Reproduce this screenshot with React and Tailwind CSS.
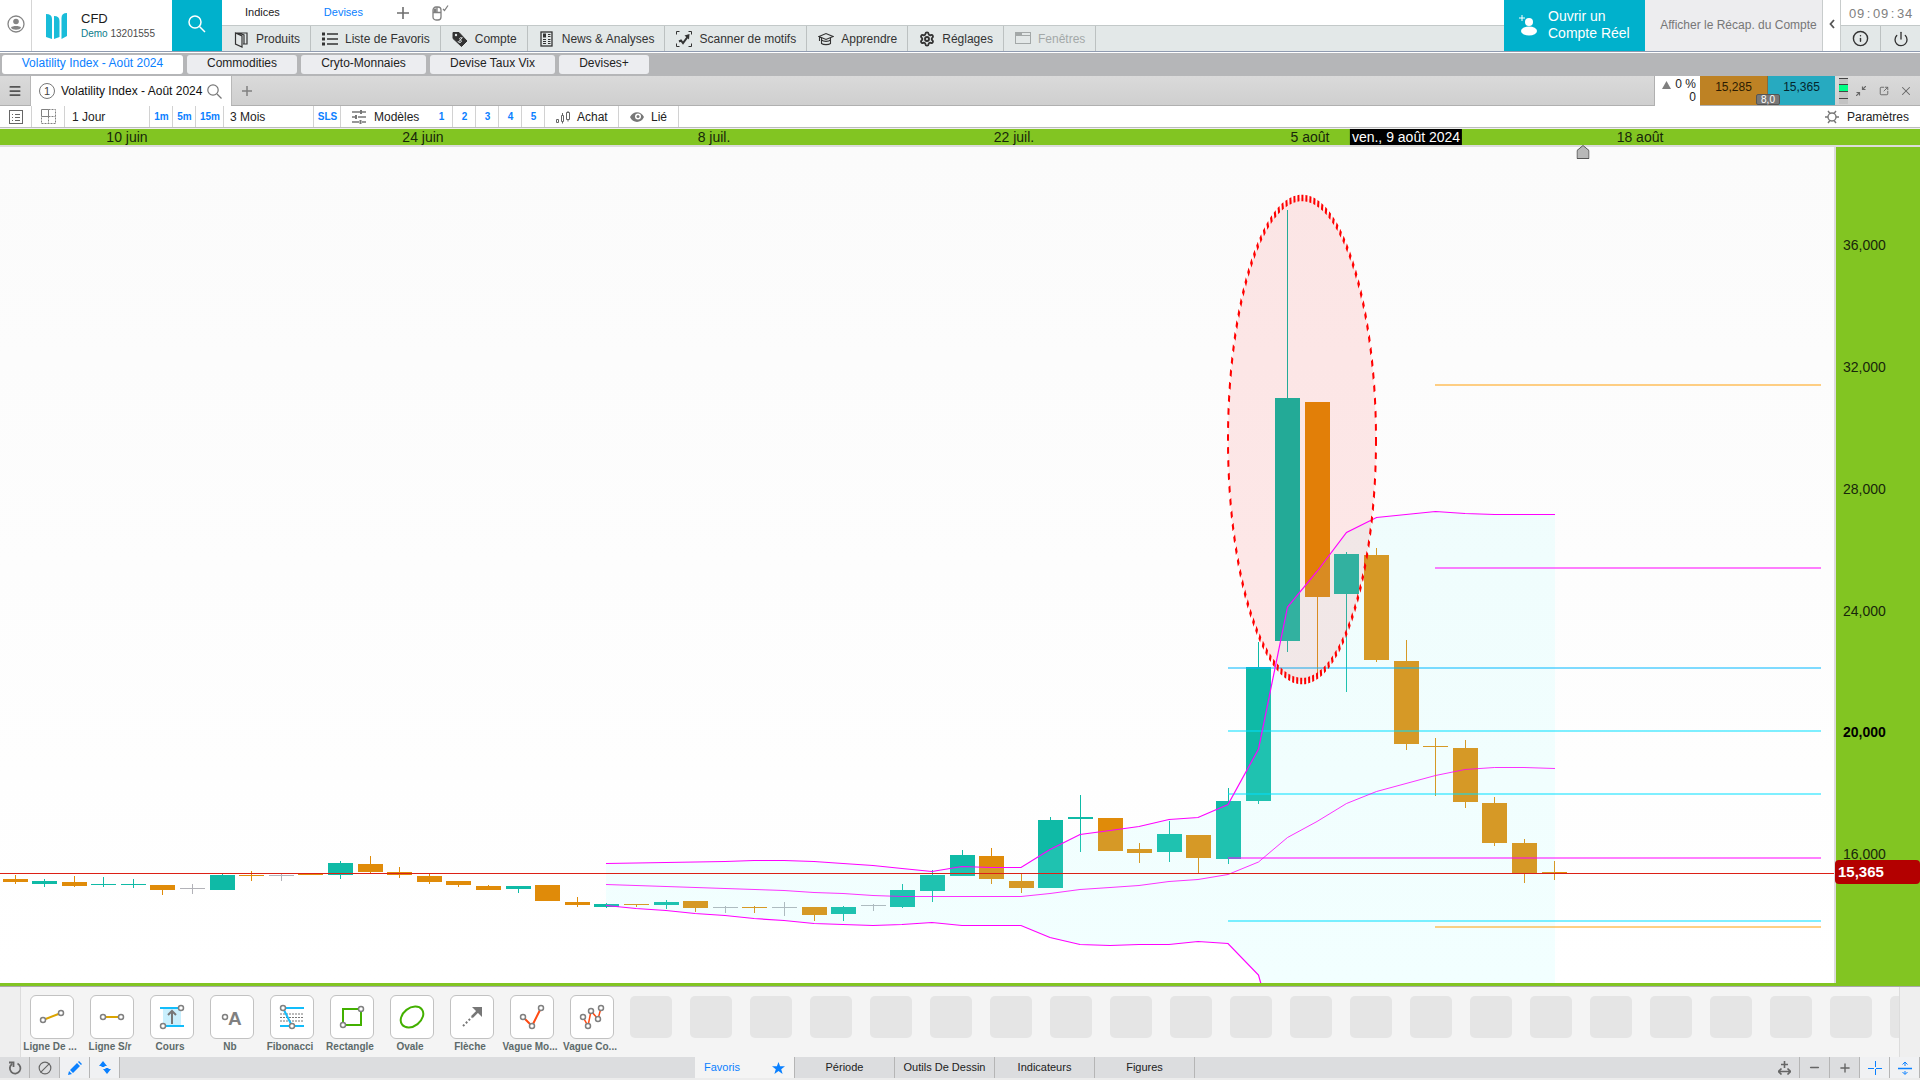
/**
 * App.jsx
 * ──────────────────────────────────────────────────────────────────────────
 * CFD trading workspace: header, chart tabs, candle chart, drawing palette.
 */

import React, { useState } from 'react';
import { Ban, Info, Menu, Minus, Plus, Power, Search, Settings, SquareArrowOutUpRight, X } from 'lucide-react';

const UP = '#0fbaa6';
const DOWN = '#e08b09';
const FLAT = '#b2b2b8';

// [x, high, body top, body bottom, low, colour] in plot units
const CANDLES = [
  [15, 875, 879, 882, 884, DOWN],
  [44, 879, 881, 884, 887, UP],
  [74, 876, 882, 886, 887, DOWN],
  [103, 877, 884, 885, 887, UP],
  [133, 879, 884, 885, 888, UP],
  [162, 885, 885, 890, 895, DOWN],
  [192, 884, 888, 889, 894, FLAT],
  [222, 874, 875, 890, 890, UP],
  [251, 871, 875, 876, 881, DOWN],
  [281, 874, 875, 876, 881, FLAT],
  [310, 873, 874, 875, 875, DOWN],
  [340, 861, 863, 875, 879, UP],
  [370, 856, 864, 872, 873, DOWN],
  [399, 867, 872, 875, 878, DOWN],
  [429, 874, 876, 882, 884, DOWN],
  [458, 881, 881, 885, 887, DOWN],
  [488, 885, 886, 890, 890, DOWN],
  [518, 886, 886, 889, 893, UP],
  [547, 885, 885, 901, 901, DOWN],
  [577, 897, 902, 905, 907, DOWN],
  [606, 903, 904, 907, 908, UP],
  [636, 904, 904, 905, 907, DOWN],
  [666, 900, 902, 905, 909, UP],
  [695, 901, 901, 908, 912, DOWN],
  [725, 906, 907, 908, 913, FLAT],
  [754, 906, 907, 908, 913, DOWN],
  [784, 902, 907, 908, 916, FLAT],
  [814, 907, 907, 915, 921, DOWN],
  [843, 906, 907, 914, 921, UP],
  [873, 904, 905, 906, 911, FLAT],
  [902, 884, 890, 907, 908, UP],
  [932, 870, 875, 891, 902, UP],
  [962, 850, 855, 876, 876, UP],
  [991, 848, 856, 879, 884, DOWN],
  [1021, 874, 881, 888, 893, DOWN],
  [1050, 817, 820, 888, 888, UP],
  [1080, 795, 817, 819, 852, UP],
  [1110, 818, 818, 851, 851, DOWN],
  [1139, 843, 849, 853, 863, DOWN],
  [1169, 821, 834, 852, 862, UP],
  [1198, 835, 835, 858, 873, DOWN],
  [1228, 788, 801, 859, 864, UP],
  [1258, 642, 667, 801, 804, UP],
  [1287, 210, 398, 641, 652, UP],
  [1317, 402, 402, 597, 676, DOWN],
  [1346, 552, 554, 594, 692, UP],
  [1376, 548, 555, 660, 662, DOWN],
  [1406, 640, 661, 744, 750, DOWN],
  [1435, 738, 746, 747, 796, DOWN],
  [1465, 740, 748, 802, 808, DOWN],
  [1494, 797, 803, 843, 846, DOWN],
  [1524, 839, 843, 873, 883, DOWN],
  [1554, 861, 872, 873, 880, DOWN],
];

// Bollinger bands, plot units
const UPPER = '606,863.5 666,862.5 725,861.5 754,860.5 784,860.5 814,861.5 843,863.5 873,865.5 902,868.5 932,871.5 962,866.5 991,867.5 1021,867.5 1050,849.5 1080,834.5 1110,830.5 1139,826.5 1169,819.5 1198,817.5 1228,804.5 1258.5,749 1287.5,607 1317,571.5 1346.5,532.5 1376.5,517.5 1435.5,511.5 1465,513.5 1494.5,514.5 1555,514.5';
const MIDDLE = '606,884.5 666,886.5 784,890.5 814,892.5 843,893.5 873,895.5 902,896.5 1021,896.5 1050,893.5 1080,889.5 1110,887.5 1139,885.5 1169,881.5 1198,879.5 1228,874.5 1258.5,862 1287.5,837.5 1317,821.5 1346.5,803.5 1376.5,791.5 1406,783.5 1435.5,775.5 1465,769.5 1494.5,767.5 1524,767.5 1555,768.5';
const LOWER = '606,905.5 636,908.5 666,910.5 695,913.5 725,915.5 754,918.5 784,920.5 814,923.5 843,924.5 873,925.5 902,924.5 932,922.5 962,925.5 1021,925.5 1050,937.5 1080,944.5 1110,945.5 1139,944.5 1169,944.5 1198,941.5 1228,943.5 1258.5,975 1261,984';

// [x1, y, colour]
const LEVELS = [
  [1435, 385, '#ff9f0a'],
  [1435, 568, '#ff00ff'],
  [1228, 668, '#00b7ff'],
  [1228, 731, '#00dfff'],
  [1228, 794, '#00dfff'],
  [1228, 858, '#ff00ff'],
  [1228, 921, '#00dfff'],
  [1435, 927, '#ff9f0a'],
];

const PLOT_W = 1834;
const PLOT_TOP = 147;
const PLOT_H = 836;

const DATES = [['10 juin', 127], ['24 juin', 423], ['8 juil.', 714], ['22 juil.', 1014], ['5 août', 1310], ['18 août', 1640]];
const PRICES = [['36,000', 245], ['32,000', 367], ['28,000', 489], ['24,000', 611], ['20,000', 732], ['16,000', 854]];

const pctX = x => `${(x / 1920) * 100}%`;
const pctY = y => `${((y - PLOT_TOP) / PLOT_H) * 100}%`;

function Svg({ w = 16, h = 16, children, ...rest }) {
  return (
    <svg width={w} height={h} viewBox={`0 0 ${w} ${h}`} fill="none" stroke="currentColor" aria-hidden="true" {...rest}>
      {children}
    </svg>
  );
}

/* ── Header ─────────────────────────────────────────────────────────── */

const MENU = [
  ['Produits', (
    <Svg w={14} h={18} strokeWidth="1.2">
      <path d="M1.500 3h11.500v11H9M1.500 3v11l6.500 3V6z M4 3l6 2v9" />
    </Svg>
  )],
  ['Liste de Favoris', (
    <Svg w={16} h={14}>
      <path d="M0 2h3M0 7h3M0 12h3" strokeWidth="3" />
      <path d="M5 2h11M5 7h11M5 12h11" strokeWidth="1.500" />
    </Svg>
  )],
  ['Compte', (
    <Svg w={16} h={16}>
      <path d="M1 1.500h6l8 8.500-5.500 5.500L1 7.500z" fill="currentColor" />
      <circle cx="4" cy="4" r="1.2" fill="#e3e8e8" stroke="none" />
      <path d="M10 7c-2-1-3 .5-2 1.500s2 1.500 1 2.500-2.500.5-3-.5M10.500 6.500l-4 4.500" stroke="#e3e8e8" />
    </Svg>
  )],
  ['News & Analyses', (
    <Svg w={13} h={16} strokeWidth="1.3">
      <rect x="1" y="1" width="11" height="14" />
      <path d="M3 3.500h3M3 5.500h3" strokeWidth="2" />
      <path d="M8 3.500h2.500M8 5.500h2.500M3 8.500h3M8 8.500h2.500M3 10.500h3M8 10.500h2.500M3 12.500h3M8 12.500h2.500" strokeWidth="1" />
    </Svg>
  )],
  ['Scanner de motifs', (
    <Svg w={16} h={16}>
      <path d="M.5 3.500v-3h3M12.500.5h3v3M15.500 12.500v3h-3M3.500 15.500h-3v-3" />
      <path d="M3 10.500l2-1 2 2.500L11.500 6" strokeWidth="2" />
      <path d="M8.500 4.500l5-1.500-.5 5.500z" fill="currentColor" stroke="none" />
    </Svg>
  )],
  ['Apprendre', (
    <Svg w={16} h={14} strokeWidth="1.100">
      <path d="M1 4.500L8 1.500l7 3-7 3zM3.500 6v5.500c2 1.500 7 1.500 9 0V6M3.500 8c2 1.800 7 1.800 9 0M1.500 5v4" />
    </Svg>
  )],
  ['Réglages', <Settings size={16} strokeWidth={2.8} />],
  ['Fenêtres', (
    <Svg w={16} h={13}>
      <rect x=".5" y=".5" width="15" height="11" />
      <path d="M1 3.500h14" strokeWidth="1" />
      <path d="M1 2h6" strokeWidth="2" />
    </Svg>
  )],
];

function Header() {
  return (
    <header className="flex h-[52px] shrink-0 border-b border-[#8f9bb0] bg-white">
      <button aria-label="Profil" className="flex w-8 items-center justify-center border-r border-[#d5d5d5] pb-1 text-[#858585]">
        <Svg w={18} h={18} strokeWidth="1.300">
          <circle cx="9" cy="9" r="8" />
          <circle cx="9" cy="6.500" r="2.800" fill="currentColor" stroke="none" />
          <path d="M4 12.500c1-2 9-2 10 0-1 3-9 3-10 0z" fill="currentColor" stroke="none" />
        </Svg>
      </button>
      <div className="flex w-[140px] items-center gap-[14px] pl-[14px]">
        <Svg w={21} h={26} stroke="none">
          <path d="M0 1q6 0 6 5v20l-6-2zM8 3q5.500 0 5.500 5v16l-5.500 2zM15.500 5q0-5 5.500-5v23l-5.500 3z" fill="#19bcd9" />
        </Svg>
        <div className="flex flex-col">
          <span className="text-[13px] leading-4 text-[#1c1c1c]">CFD</span>
          <span className="text-[10px] leading-[14px] text-[#4b4b4b]"><span className="text-[#0c7c8c]">Demo</span> 13201555</span>
        </div>
      </div>
      <button aria-label="Rechercher" className="flex w-[50px] items-center justify-center bg-[#00b1cc] pb-1 text-white">
        <Svg w={18} h={18} strokeWidth="1.500">
          <circle cx="7" cy="7" r="6" />
          <path d="M11.500 11.500L17 17" />
        </Svg>
      </button>

      <div className="flex min-w-0 flex-1 flex-col">
        <div className="flex h-[25px] items-center pl-[23px] text-[11px]">
          <button className="pr-11 text-[#222]">Indices</button>
          <button className="pr-[34px] text-[#0a80ff]">Devises</button>
          <button aria-label="Ajouter" className="pr-[23px] text-[#6f6f6f]">
            <Svg w={12} h={12} strokeWidth="1.600"><path d="M6 0v12M0 6h12" /></Svg>
          </button>
          <button aria-label="Souris" className="text-[#808080]">
            <Svg w={17} h={16} strokeWidth="1.300">
              <rect x="1" y="2" width="8" height="13" rx="3" />
              <path d="M1 7.500h8M5 2v5.500" />
              <path d="M1.500 3.500h3V7h-3z" fill="currentColor" stroke="none" />
              <path d="M11 4l1.500 1.500L16 .5" />
            </Svg>
          </button>
        </div>
        <nav className="flex h-[26px] border-t border-[#c3c9c9] bg-[#e3e8e8] text-xs">
          {MENU.map(([label, icon]) => (
            <button
              key={label}
              className={`flex items-center gap-[5px] border-r border-[#bcc1c1] pl-[9px] pr-[10px] whitespace-nowrap ${
                label === 'Fenêtres' ? 'text-[#a3a8a8]' : 'text-[#333]'
              }`}
            >
              <span className="flex w-5 justify-center">{icon}</span>
              {label}
            </button>
          ))}
        </nav>
      </div>

      <button className="flex w-[141px] items-center gap-[11px] bg-[#00b1cc] pb-0.5 pl-[15px] text-left text-sm leading-[17px] text-white">
        <Svg w={18} h={22} stroke="none" fill="currentColor">
          <path d="M3 1v6M0 4h6" stroke="currentColor" />
          <circle cx="10" cy="8" r="4" />
          <ellipse cx="10" cy="17" rx="8" ry="4.500" />
        </Svg>
        <span>Ouvrir un<br />Compte Réel</span>
      </button>
      <button className="w-[177px] bg-[#ededef] pb-0.5 pl-[10px] text-xs text-[#777]">Afficher le Récap. du Compte</button>
      <button aria-label="Replier" className="flex w-[19px] items-center justify-center border-x border-[#c8cccc] pb-1 text-[#555]">
        <Svg w={6} h={10} strokeWidth="1.800"><path d="M5 1L1.500 5 5 9" /></Svg>
      </button>
      <div className="flex w-[79px] flex-col">
        <time className="h-[25px] text-center text-[13px] leading-[27px] text-[#808080]">
          {[...'09:09:34'].map((c, i) => <span key={i} className="inline-block w-2 text-center">{c}</span>)}
        </time>
        <div className="flex h-[26px] border-t border-[#c3c9c9] bg-[#e3e8e8] text-[#333]">
          <button aria-label="Infos" className="flex flex-1 items-center justify-center border-r border-[#bcc1c1]"><Info size={17} strokeWidth={2} /></button>
          <button aria-label="Quitter" className="flex flex-1 items-center justify-center"><Power size={16} strokeWidth={2} /></button>
        </div>
      </div>
    </header>
  );
}

/* ── Workspace and chart tabs ───────────────────────────────────────── */

const WORKSPACES = [
  ['Volatility Index - Août 2024', 'w-[181px] bg-white text-[#0a80ff]'],
  ['Commodities', 'w-[110px] bg-[#ecedf0] text-[#222]'],
  ['Cryto-Monnaies', 'w-[125px] bg-[#ecedf0] text-[#222]'],
  ['Devise Taux Vix', 'w-[125px] bg-[#ecedf0] text-[#222]'],
  ['Devises+', 'w-[90px] bg-[#ecedf0] text-[#222]'],
];

function WorkspaceTabs() {
  return (
    <nav className="flex h-6 shrink-0 items-center gap-1 border-t border-white bg-[#b5b6b8] pl-0.5 text-xs">
      {WORKSPACES.map(([label, look]) => (
        <button key={label} className={`h-[19px] rounded-[3px] pb-0.5 leading-[17px] ${look}`}>{label}</button>
      ))}
    </nav>
  );
}

function ChartTitleBar() {
  return (
    <div className="flex h-[30px] shrink-0 border-b border-[#b0b0b0] bg-linear-to-b from-[#dadada] to-[#cfcfcf] text-xs">
      <button aria-label="Menu" className="flex w-[31px] items-center justify-center border-r border-[#b8b8b8] text-[#555]">
        <Menu size={14} strokeWidth={3} />
      </button>
      <div className="flex h-[30px] w-[200px] items-center bg-white pl-2 text-[#111]">
        <span className="mr-[6px] flex size-4 items-center justify-center rounded-full border border-[#777] text-[11px] text-[#444]">1</span>
        <span className="whitespace-nowrap">Volatility Index - Août 2024</span>
        <button aria-label="Chercher un produit" className="ml-[5px] text-[#777]">
          <Svg w={15} h={15} strokeWidth="1.200"><circle cx="6" cy="6" r="5.200" /><path d="M10 10l4.500 4.500" /></Svg>
        </button>
      </div>
      <button aria-label="Nouvel onglet" className="flex w-[31px] items-center justify-center border-l border-[#b8b8b8] text-[#808080]">
        <Svg w={10} h={10} strokeWidth="1.500"><path d="M5 0v10M0 5h10" /></Svg>
      </button>

      <div className="ml-auto flex h-[30px] w-[46px] flex-col items-end justify-center border-l border-[#b0b0b0] bg-white pr-1 leading-[13px] text-[#222]">
        <span className="flex items-center gap-1"><Svg w={9} h={8} stroke="none"><path d="M4.500 0L9 8H0z" fill="#808080" /></Svg>0 %</span>
        <span>0</span>
      </div>
      <div className="relative flex w-[135px] leading-[22px]">
        <button className="flex-1 border-r border-[#8a6a3a] bg-[#be8224] pb-2 text-[#2c1c02]">15,285</button>
        <button className="flex-1 bg-[#27aac0] pb-2 text-[#04262d]">15,365</button>
        <span className="absolute left-14 bottom-0 h-[11px] w-6 rounded-xs border border-[#555] bg-[#777] text-center text-[10px] leading-[9px] text-white">8,0</span>
      </div>
      <div className="flex w-[85px] items-center pl-1 text-[#666]">
        <Svg w={9} h={28} stroke="none">
          <path d="M0 1h9v26H0z" fill="#c3c3c3" />
          <path d="M0 8h9v6H0z" fill="#00ff85" />
          <path d="M0 1.500h9M0 7.500h9M0 14.500h9M0 21.500h9" stroke="#444" />
        </Svg>
        <button aria-label="Réduire" className="ml-2">
          <Svg w={10} h={10} strokeWidth="1.200"><path d="M10 0L6.500 3.500M6.500.5v3h3M0 10l3.500-3.500M.5 6.500h3v3" /></Svg>
        </button>
        <button aria-label="Détacher" className="ml-[13px]"><SquareArrowOutUpRight size={10} strokeWidth={2.2} /></button>
        <button aria-label="Fermer" className="ml-[10px]"><X size={14} strokeWidth={1.8} /></button>
      </div>
    </div>
  );
}

/* ── Chart toolbar ──────────────────────────────────────────────────── */

function Cell({ className = '', children, ...rest }) {
  return (
    <button className={`flex shrink-0 items-center border-r border-[#d2d2d2] ${className}`} {...rest}>
      {children}
    </button>
  );
}

function ChartToolbar() {
  const small = 'justify-center pl-px text-[10px] font-bold text-[#0a80ff]';
  return (
    <div className="flex h-[22px] shrink-0 border-b border-[#bdbdbd] bg-white text-xs text-[#222]">
      <Cell aria-label="Liste" className="w-8 justify-center text-[#666]">
        <Svg w={14} h={14}><rect x=".5" y=".5" width="13" height="13" /><path d="M3 4.500h1M6 4.500h5M3 7.500h1M6 7.500h5M3 10.500h1M6 10.500h5" /></Svg>
      </Cell>
      <Cell aria-label="Disposition" className="w-[33px] justify-center text-[#808080]">
        <Svg w={15} h={15}>
          <path d="M.5.5h7v7h-7z" />
          <path d="M7.500.5h7v14H.5v-7M7.500 7.500h7M7.500 7.500v7" strokeDasharray="2 1" />
        </Svg>
      </Cell>
      <Cell className="w-[85px] pl-[7px]">1 Jour</Cell>
      <Cell className={`w-[23px] ${small}`}>1m</Cell>
      <Cell className={`w-[23px] ${small}`}>5m</Cell>
      <Cell className={`w-[28px] ${small}`}>15m</Cell>
      <Cell className="w-[90px] pl-[6px]">3 Mois</Cell>
      <Cell className={`w-[27px] ${small}`}>SLS</Cell>
      <button className="flex w-[89px] shrink-0 items-center gap-2 pl-[11px]">
        <Svg w={14} h={14} className="text-[#777]">
          <path d="M0 2h8M10 2h4M0 7h3M6 7h8M0 12h7M10 12h4" strokeWidth="1.500" />
          <path d="M9 0v4M4 5v4M8.500 10v4" strokeWidth="2" />
        </Svg>
        Modèles
      </button>
      {['1', '2', '3', '4', '5'].map(n => <Cell key={n} className={`w-[23px] ${small}`}>{n}</Cell>)}
      <Cell className="w-[74px] gap-[7px] pl-[11px]">
        <Svg w={14} h={14} className="text-[#666]">
          <path d="M.5 9.500h2v3h-2zM5.500 5.500h2v6h-2zM6.500 3v2.500M6.500 11.500v2M10.500 2.500h3v7h-3zM12 1v1.500M12 9.500v2" />
        </Svg>
        Achat
      </Cell>
      <Cell className="w-[60px] gap-[7px] pl-[11px]">
        <Svg w={14} h={10} stroke="none">
          <path d="M0 5C3-1.500 11-1.500 14 5 11 11.500 3 11.500 0 5z" fill="#777" />
          <circle cx="8" cy="4.500" r="3" fill="#fff" />
          <circle cx="8" cy="4.500" r="1.500" fill="#777" />
        </Svg>
        Lié
      </Cell>
      <button className="ml-auto flex items-center gap-2 pr-[11px]">
        <Svg w={14} h={14} strokeWidth="1.400" className="text-[#777]">
          <circle cx="7" cy="7" r="4" />
          <path d="M0 7h3M11 7h3M3 1l2 2.500M11 1L9 3.500M3 13l2-2.500M11 13l-2-2.500" />
        </Svg>
        Paramètres
      </button>
    </div>
  );
}

/* ── Chart ──────────────────────────────────────────────────────────── */

function DateAxis() {
  return (
    <div className="relative mt-px h-[18px] shrink-0 border-b-2 border-[#dcdcdc] bg-[#82c522] text-sm leading-4 text-[#17270a]">
      {DATES.map(([label, x]) => (
        <span key={label} className="absolute top-0 -translate-x-1/2 whitespace-nowrap" style={{ left: pctX(x) }}>{label}</span>
      ))}
      <span className="absolute top-0 -translate-x-1/2 whitespace-nowrap bg-black px-0.5 text-white" style={{ left: pctX(1406) }}>ven., 9 août 2024</span>
      <svg width="13" height="14" viewBox="0 0 13 14" className="absolute top-4 z-10 -translate-x-1/2" style={{ left: pctX(1583) }} aria-hidden="true">
        <path d="M.5 13.500v-8l6-5 6 5v8z" fill="#b8b8b8" stroke="#555" />
      </svg>
    </div>
  );
}

function Plot() {
  return (
    <div className="relative min-w-0 flex-1 bg-linear-to-b from-[#fbfbfb] to-white">
      <svg
        viewBox={`0 ${PLOT_TOP} ${PLOT_W} ${PLOT_H}`}
        preserveAspectRatio="none"
        className="absolute inset-0 size-full"
        role="img"
        aria-label="Volatility Index"
      >
        <g shapeRendering="crispEdges">
          {CANDLES.map(([x, high, top, bottom, low, color]) => (
            <g key={x} fill={color}>
              <rect x={x} y={high} width="1" height={low - high} />
              <rect x={x - 12} y={top} width="25" height={bottom - top} />
            </g>
          ))}
        </g>

        {/* band area: upper edge, then straight down to the plot floor */}
        <polygon points={`${UPPER} 1555,984 ${LOWER.split(' ').reverse().join(' ')}`} fill="#92ffff" fillOpacity="0.12" />

        <g shapeRendering="crispEdges">
          {LEVELS.map(([x, y, color]) => (
            <rect key={y} x={x} y={y - 1} width={1821 - x} height="2" fill={color} fillOpacity="0.5" />
          ))}
        </g>

        {/* circle stretched on y, so the dashes stretch with it */}
        <circle r="74" transform="translate(1302 439.500) scale(1 3.264)" fill="#ff0000" fillOpacity="0.085" />
        <g fill="none" stroke="#ff00ff" strokeWidth="1.2">
          <polyline points={UPPER} />
          <polyline points={MIDDLE} strokeOpacity="0.8" strokeWidth="1" />
          <polyline points={LOWER} />
        </g>
        <rect x="0" y="873" width={PLOT_W} height="1" fill="#dc2016" shapeRendering="crispEdges" />
        <circle r="74" transform="translate(1302 439.500) scale(1 3.264)" fill="none" stroke="#ff0000" strokeWidth="2" strokeDasharray="2 2" />
      </svg>
    </div>
  );
}

function PriceAxis() {
  return (
    <div className="relative w-[86px] shrink-0 border-l-2 border-[#dcdcdc] bg-[#82c522] text-sm leading-4 text-[#17270a]">
      {PRICES.map(([label, y]) => (
        <span
          key={label}
          className={`absolute left-[7px] -translate-y-1/2 ${label === '20,000' ? 'font-bold text-black' : ''}`}
          style={{ top: pctY(y) }}
        >
          {label}
        </span>
      ))}
      <span
        className="absolute -left-px right-0 h-6 -translate-y-1/2 rounded-sm bg-[#b30000] pl-[3px] text-[15px] leading-6 font-bold text-white"
        style={{ top: pctY(872) }}
      >
        15,365
      </span>
    </div>
  );
}

/* ── Drawing palette ────────────────────────────────────────────────── */

function Dots({ points }) {
  return points.map(([x, y]) => <circle key={x} cx={x} cy={y} r="2.500" fill="#fff" stroke="#808080" strokeWidth="1.500" />);
}

const TOOLS = [
  ['Ligne De ...', (
    <>
      <path d="M13 25l18-7" stroke="#dba400" strokeWidth="2" />
      <Dots points={[[13, 25], [31, 18]]} />
    </>
  )],
  ['Ligne S/r', (
    <>
      <path d="M13 22h18" stroke="#dba400" strokeWidth="2" />
      <Dots points={[[13, 22], [31, 22]]} />
    </>
  )],
  ['Cours', (
    <>
      <path d="M13 13h18v18H13z" fill="#c9effd" stroke="none" />
      <path d="M10 13h20M14 31h20" stroke="#12bdfb" strokeWidth="2" />
      <path d="M22 29V16M18 20l4-4 4 4" stroke="#777" strokeWidth="2" />
      <Dots points={[[31, 13], [13, 31]]} />
    </>
  )],
  ['Nb', (
    <>
      <Dots points={[[15, 22]]} />
      <text x="18" y="30" fontSize="19" fontWeight="bold" fill="#808080" stroke="none">A</text>
    </>
  )],
  ['Fibonacci', (
    <>
      <path d="M10 19h24M10 22.500h24M10 26h24" stroke="#777" strokeDasharray="2 1" />
      <path d="M13 13l9 18M16 13h18M10 31h9M25 31h9" stroke="#12bdfb" strokeWidth="2" />
      <Dots points={[[13, 13], [22, 31]]} />
    </>
  )],
  ['Rectangle', (
    <>
      <path d="M13 14h18v16H13z" stroke="#43b000" strokeWidth="2" />
      <Dots points={[[31, 14], [13, 30]]} />
    </>
  )],
  ['Ovale', <ellipse cx="22" cy="22" rx="12.500" ry="9" transform="rotate(-38 22 22)" stroke="#43b000" strokeWidth="2" />],
  ['Flèche', (
    <>
      <path d="M13 31l9-9" stroke="#777" strokeWidth="2" strokeDasharray="2 2" />
      <path d="M22 22l7-7" stroke="#777" strokeWidth="2.500" />
      <path d="M22 12h10v10l-3.500-3.500-3-3z" fill="#777" stroke="none" />
    </>
  )],
  ['Vague Mo...', (
    <>
      <path d="M13 22l9 9 9-18" stroke="#ff4a12" strokeWidth="2" />
      <Dots points={[[13, 22], [22, 31], [31, 13]]} />
    </>
  )],
  ['Vague Co...', (
    <>
      <path d="M13 22l5 9 3-15 7 8 3-11" stroke="#ff4a12" strokeWidth="1.500" />
      <Dots points={[[13, 22], [18, 31], [21, 16], [28, 24], [31, 13]]} />
    </>
  )],
];

function Palette() {
  return (
    <div className="flex h-[71px] shrink-0 border-t border-[#a9a9a9] bg-[#f4f4f4]">
      <div className="w-[21px] shrink-0 border-r border-[#dcdcdc] bg-[#efefef]" />
      <div className="flex min-w-0 flex-1 overflow-hidden pt-2">
        {TOOLS.map(([label, icon]) => (
          <button key={label} className="flex w-[60px] shrink-0 flex-col items-center gap-0.5 text-[#5d6a6a]">
            <span className="ml-0.5 rounded-md border border-[#c2c2c2] bg-white">
              <svg width="42" height="42" viewBox="1 1 42 42" fill="none" aria-hidden="true">{icon}</svg>
            </span>
            <span className="pr-0.5 whitespace-nowrap text-[10px] leading-3 font-bold">{label}</span>
          </button>
        ))}
        {Array.from({ length: 22 }, (_, i) => (
          <div key={i} className="flex w-[60px] shrink-0 justify-center pt-px">
            <div className="size-[42px] rounded-[5px] bg-[#e5e5e5]" />
          </div>
        ))}
      </div>
      <div className="w-[21px] shrink-0 border-l border-[#dcdcdc] bg-[#efefef]" />
    </div>
  );
}

/* ── Bottom bar ─────────────────────────────────────────────────────── */

function BarBtn({ label, on = false, children }) {
  return (
    <button
      aria-label={label}
      aria-pressed={on}
      className={`flex w-[30px] items-center justify-center border-r border-[#b5b5b5] ${on ? 'bg-[#f0f1f3] text-[#0a80ff]' : 'text-[#666]'}`}
    >
      {children}
    </button>
  );
}

function BottomBar() {
  const [tab, setTab] = useState('Favoris');
  return (
    <div className="flex h-[21px] shrink-0 bg-[#dcdddf] text-[11px] text-[#222]">
      <div className="flex flex-1">
        <BarBtn label="Rétablir">
          <Svg w={14} h={14} strokeWidth="1.800"><path d="M9.500 2.500a5.300 5.300 0 1 1-5.500.5M1 1.500h4.500V6" /></Svg>
        </BarBtn>
        <BarBtn label="Effacer"><Ban size={14} strokeWidth={2} className="-scale-x-100" /></BarBtn>
        <BarBtn label="Dessiner" on>
          <Svg w={14} h={14} stroke="none"><path d="M0 14l1-4 3 3zM2 9l7-7 3 3-7 7zM10 1l1-1 3 3-1 1z" fill="currentColor" /></Svg>
        </BarBtn>
        <BarBtn label="Aimanter" on>
          <Svg w={12} h={13} stroke="none"><path d="M4 0l4 5H5.500v1h-3V5H0zM8 13L4 8h2.500V7h3v1H12z" fill="currentColor" /></Svg>
        </BarBtn>
      </div>
      <div role="tablist" className="mr-[30px] flex">
        {['Favoris', 'Période', 'Outils De Dessin', 'Indicateurs', 'Figures'].map(name => (
          <button
            key={name}
            role="tab"
            aria-selected={tab === name}
            onClick={() => setTab(name)}
            className={`flex w-[100px] items-center border-r border-[#b5b5b5] whitespace-nowrap ${
              tab === name ? 'justify-between bg-[#f4f4f4] px-[9px] text-[#0a80ff]' : 'justify-center'
            }`}
          >
            {name}
            {tab === name && (
              <Svg w={13} h={12} stroke="none"><path d="M6.500 0l1.600 4.300H13L9.200 7.200l1.400 4.800-4.100-2.900L2.400 12l1.400-4.800L0 4.300h4.900z" fill="currentColor" /></Svg>
            )}
          </button>
        ))}
      </div>
      <div className="flex flex-1 justify-end">
        <BarBtn label="Ajuster">
          <Svg w={13} h={14} strokeWidth="1.600"><path d="M6.500 0v7M3 3.500h7M1 10.500h11M3.500 7.500l-3 3 3 3M9.500 7.500l3 3-3 3" /></Svg>
        </BarBtn>
        <BarBtn label="Zoom arrière"><Minus size={13} strokeWidth={3} /></BarBtn>
        <BarBtn label="Zoom avant"><Plus size={14} strokeWidth={2.4} /></BarBtn>
        <BarBtn label="Réticule" on>
          <Svg w={14} h={14}><path d="M7.500 0v6M7.500 8v6M0 7.500h6M8 7.500h6" /></Svg>
        </BarBtn>
        <BarBtn label="Échelle verticale" on>
          <Svg w={14} h={14}><path d="M0 7.500h14" strokeWidth="1.500" /><path d="M7 1v4M7 10v3M4.500 3.500L7 1l2.500 2.500M4.500 11L7 13.500 9.500 11" /></Svg>
        </BarBtn>
      </div>
    </div>
  );
}

export default function App() {
  return (
    <div className="flex h-screen flex-col overflow-hidden bg-[#f0f0f0] font-['Liberation_Sans',Arial,sans-serif]">
      <Header />
      <WorkspaceTabs />
      <ChartTitleBar />
      <ChartToolbar />
      <DateAxis />
      <main className="flex min-h-0 flex-1 border-b-3 border-[#82c522]">
        <Plot />
        <PriceAxis />
      </main>
      <Palette />
      <BottomBar />
      <div className="h-0.5 shrink-0 bg-[#ececec]" />
    </div>
  );
}
